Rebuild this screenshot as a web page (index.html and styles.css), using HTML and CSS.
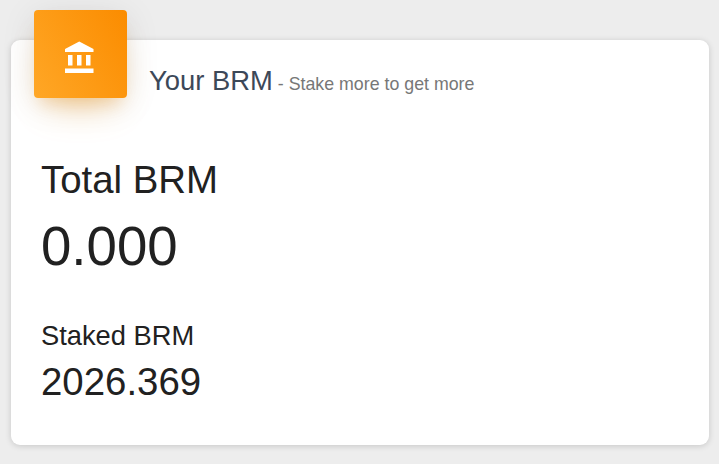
FILE: index.html
```html
<!DOCTYPE html>
<html lang="en">
<head>
  <meta charset="UTF-8">
  <meta name="viewport" content="width=device-width, initial-scale=1.0">
  <title>Your BRM</title>
  <link rel="stylesheet" href="styles.css">
</head>
<body>
  <div class="card">
    <div class="card-header">
      <div class="card-icon">
        <svg class="icon" viewBox="0 0 24 24">
          <path d="M4 10v7h3v-7H4zm6 0v7h3v-7h-3zM2 22h19v-3H2v3zm14-12v7h3v-7h-3zm-4.500-9L2 6v2h19V6l-9.500-5z"/>
        </svg>
      </div>
      <h4 class="card-title">Your BRM<small> - Stake more to get more</small></h4>
    </div>
    <div class="card-body">
      <h3 class="total-label">Total BRM</h3>
      <div class="total-value">0.000</div>
      <h4 class="staked-label">Staked BRM</h4>
      <div class="staked-value">2026.369</div>
    </div>
  </div>
</body>
</html>
```

FILE: styles.css
```css
body {
  min-height: 100vh;
  margin: 0;
  padding: 40px 10px 0 11px;
  box-sizing: border-box;
  background-color: #ededed;
  color: #212121;
  font-family: "Liberation Sans", Arial, sans-serif;
}

h3, h4 {
  margin: 0;
  font-weight: 400;
}

.card {
  height: 405px;
  background: #ffffff;
  border-radius: 9px;
  box-shadow: 0 1px 6px rgba(0, 0, 0, 0.16);
}

.card-header {
  display: flex;
  padding: 0 23px;
}

.card-icon {
  display: flex;
  align-items: center;
  justify-content: center;
  width: 93px;
  height: 88px;
  margin-top: -30px;
  margin-right: 22px;
  padding-top: 7px;
  padding-right: 2px;
  box-sizing: border-box;
  border-radius: 4px;
  background: linear-gradient(60deg, #ffa726, #fb8c00);
  box-shadow: 0 6px 34px rgba(0, 0, 0, 0.1), 0 20px 38px -17px rgba(255, 152, 0, 0.42), 0 12px 15px -7px rgba(255, 152, 0, 0.2);
}

.icon {
  width: 36px;
  height: 36px;
  fill: #ffffff;
}

.card-title {
  padding-top: 24px;
  color: #3c4858;
  font-size: 27.4px;
  line-height: 33px;
}

.card-title small {
  color: #777777;
  font-size: 17.8px;
}

.card-body {
  padding: 58px 30px 0;
}

.total-label {
  font-size: 38.4px;
  line-height: 42px;
}

.total-value {
  margin-top: 15px;
  font-size: 54.6px;
  line-height: 62px;
}

.staked-label {
  margin-top: 42px;
  font-size: 27.3px;
  line-height: 32px;
}

.staked-value {
  margin-top: 8px;
  font-size: 38.4px;
  line-height: 44px;
}
```
